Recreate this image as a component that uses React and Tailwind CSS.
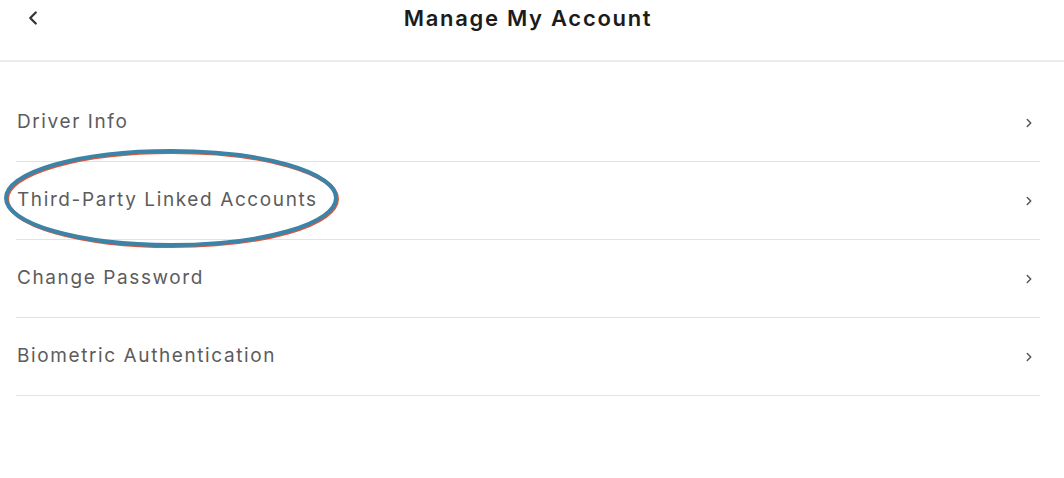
import { ChevronLeft, ChevronRight } from 'lucide-react';

const rows = ['Driver Info', 'Third-Party Linked Accounts', 'Change Password', 'Biometric Authentication'];

export default function App() {
  return (
    <main className="relative w-[1064px] h-[478px] bg-white font-['Inter',sans-serif] overflow-hidden">
      <header className="relative h-[62px] border-b-2 border-[#ececec] flex items-start justify-center pt-[3px]">
        <button className="absolute left-[22px] top-[7px] text-[#333]">
          <ChevronLeft size={22} strokeWidth={2.5} />
        </button>
        <h1 className="text-[22px] font-semibold text-[#1c1c1c] leading-[30px] tracking-[1.7px] pr-[8px]">Manage My Account</h1>
      </header>

      <ul className="mt-[22px] pl-[16px] pr-[24px]">
        {rows.map((r) => (
          <li key={r} className="h-[78px] flex items-center justify-between border-b border-[#e2e2e2]">
            <span className="text-[19px] text-[#5c5c5c] tracking-[1.6px] pl-[1px]">{r}</span>
            <ChevronRight size={14} strokeWidth={2.5} className="text-[#555] mr-[4px]" />
          </li>
        ))}
      </ul>

      <svg className="absolute left-0 top-[140px] pointer-events-none" width="360" height="120">
        <ellipse cx="172" cy="59" rx="165" ry="47" fill="none" stroke="#e0563c" strokeWidth="4" />
        <ellipse cx="171" cy="58" rx="165" ry="47" fill="none" stroke="#3b84a8" strokeWidth="4" />
      </svg>
    </main>
  );
}
